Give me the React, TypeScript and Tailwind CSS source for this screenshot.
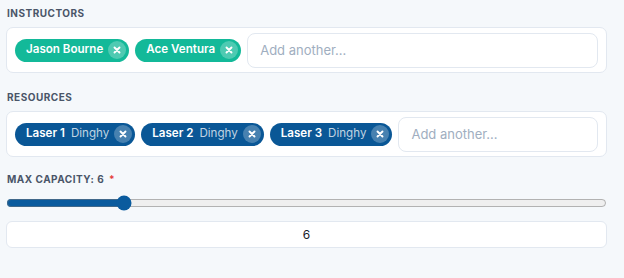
import React, { useState } from "react";

type Tag = { label: string; sub?: string };

function CloseDot() {
    return (
        <span className="flex shrink-0 items-center justify-center w-[18px] h-[18px] rounded-full bg-white/25">
            <svg width="8" height="8" viewBox="0 0 8 8" fill="none">
                <path d="M1.5 1.5L6.5 6.5M6.5 1.5L1.5 6.5" stroke="white" strokeWidth="1.9" strokeLinecap="round" />
            </svg>
        </span>
    );
}

function Chip({ tag, color }: { tag: Tag; color: string }) {
    return (
        <span className={`flex shrink-0 whitespace-nowrap items-center h-[23px] pl-[11px] pr-[3px] gap-[5px] rounded-full text-white text-[11.6px] ${color}`}>
            <span className="font-semibold">{tag.label}</span>
            {tag.sub && <span className="text-white/75 ml-[1px]">{tag.sub}</span>}
            <CloseDot />
        </span>
    );
}

function TagBox({ tags, color }: { tags: Tag[]; color: string }) {
    return (
        <div className="flex items-center gap-[6px] h-[46px] px-[8px] bg-white border border-[#e2e8f0] rounded-[7px]">
            {tags.map((t, i) => (
                <Chip key={i} tag={t} color={color} />
            ))}
            <input
                type="text"
                placeholder="Add another..."
                className="flex-1 min-w-0 h-[35px] px-[12px] text-[13px] border border-[#e2e8f0] rounded-[8px] outline-none placeholder:text-[#a0aec0]"
            />
        </div>
    );
}

export default function App() {
    const [capacity, setCapacity] = useState(6);

    const instructors = [{ label: "Jason Bourne" }, { label: "Ace Ventura" }];
    const resources = [
        { label: "Laser 1", sub: "Dinghy" },
        { label: "Laser 2", sub: "Dinghy" },
        { label: "Laser 3", sub: "Dinghy" },
    ];

    return (
        <div className="min-h-screen bg-[#f5f8fb] pl-[6px] pr-[17px] pt-[6px] font-['Inter',sans-serif] text-[#1a202c]">
            <div className="text-[10px] leading-[14px] font-bold tracking-[0.05em] text-[#4a5568] pl-[1px] mb-[7px]">INSTRUCTORS</div>
            <TagBox tags={instructors} color="bg-[#13b999]" />

            <div className="text-[10px] leading-[14px] font-bold tracking-[0.05em] text-[#4a5568] pl-[1px] mt-[17px] mb-[7px]">RESOURCES</div>
            <TagBox tags={resources} color="bg-[#0a5796]" />

            <div className="text-[10px] leading-[14px] font-bold tracking-[0.05em] text-[#4a5568] pl-[1px] mt-[15px]">
                MAX CAPACITY: {capacity} <span className="text-[#e53e3e] ml-[2px]">*</span>
            </div>
            <div className="mt-[9px]">
                <input
                    type="range"
                    min={0}
                    max={32}
                    value={capacity}
                    onChange={(e) => setCapacity(Number(e.target.value))}
                    className="block w-full m-0 accent-[#0a5b9e]"
                />
            </div>
            <input
                type="number"
                value={capacity}
                onChange={(e) => setCapacity(Number(e.target.value))}
                className="block w-full mt-[10px] h-[27px] text-center text-[12px] bg-white border border-[#e2e8f0] rounded-[6px] outline-none [appearance:textfield] [&::-webkit-inner-spin-button]:appearance-none [&::-webkit-outer-spin-button]:appearance-none"
            />
        </div>
    );
}
